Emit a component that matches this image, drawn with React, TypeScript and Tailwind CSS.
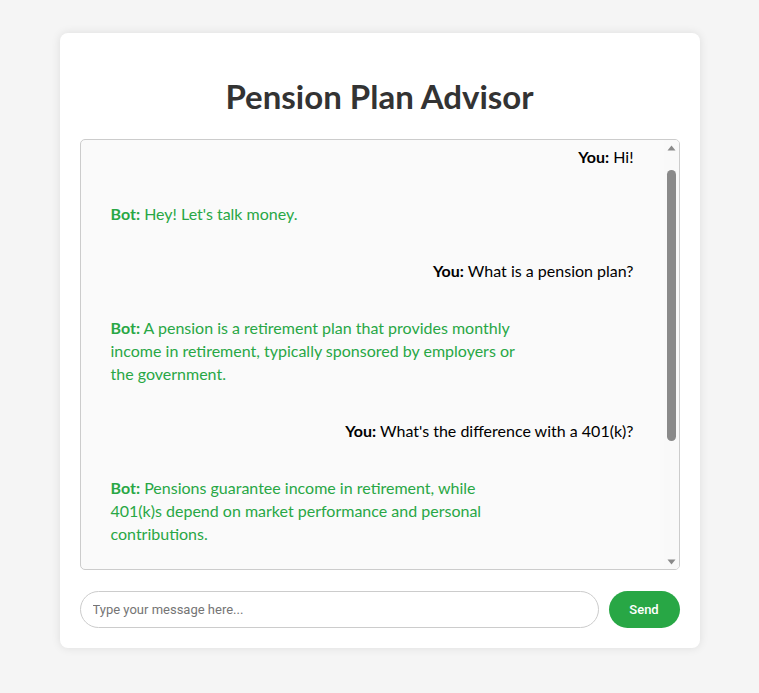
import React, { useEffect, useRef, useState } from 'react'

type Msg = { from: 'you' | 'bot'; text: string }

const initial: Msg[] = [
    { from: 'you', text: 'Hi!' },
    { from: 'bot', text: "Hey! Let's talk money." },
    { from: 'you', text: 'What is a pension plan?' },
    { from: 'bot', text: 'A pension is a retirement plan that provides monthly income in retirement, typically sponsored by employers or the government.' },
    { from: 'you', text: "What's the difference with a 401(k)?" },
    { from: 'bot', text: 'Pensions guarantee income in retirement, while 401(k)s depend on market performance and personal contributions.' },
]

function ScrollBar() {
    return (
        <div className="flex w-[15px] flex-col items-center bg-[#f9f9f9]">
            <div className="flex h-[15px] items-center justify-center">
                <svg width="9" height="6" viewBox="0 0 9 6">
                    <path d="M4.5 0.5 L8.5 5.5 L0.5 5.5 Z" fill="#8a8a8a" />
                </svg>
            </div>
            <div className="flex-1">
                <div className="mt-[15px] h-[271px] w-[9px] rounded-full bg-[#8a8a8a]"></div>
            </div>
            <div className="flex h-[15px] items-center justify-center">
                <svg width="9" height="6" viewBox="0 0 9 6">
                    <path d="M0.5 0.5 L8.5 0.5 L4.5 5.5 Z" fill="#8a8a8a" />
                </svg>
            </div>
        </div>
    )
}

export default function App() {
    const [messages, setMessages] = useState<Msg[]>(initial)
    const [input, setInput] = useState('')
    const boxRef = useRef<HTMLDivElement>(null)

    useEffect(() => {
        if (boxRef.current) boxRef.current.scrollTop = 25
    }, [])

    const send = () => {
        if (!input.trim()) return
        setMessages([...messages, { from: 'you', text: input }])
        setInput('')
    }

    return (
        <div className="min-h-screen bg-[#f5f5f5] pt-[33px] font-['Segoe_UI','Lato','Noto_Sans',sans-serif]">
            <div className="mx-auto w-[640px] rounded-lg bg-white p-5 shadow-[0_0_10px_rgba(0,0,0,0.1)]">
                <h1 className="my-[22px] text-center text-[33px] font-bold leading-[42px] text-[#333]">
                    Pension Plan Advisor
                </h1>

                <div className="flex h-[431px] overflow-hidden rounded-[5px] border border-[#ccc] bg-[#fafafa]">
                    <div ref={boxRef} className="flex-1 overflow-hidden px-2.5 pt-[18px] pb-2.5">
                        {messages.map((m, i) =>
                            m.from === 'you' ? (
                                <div key={i} className="mx-2.5 mb-2.5 px-2.5 py-3 text-right text-base leading-[23px] text-black">
                                    <b>You:</b> {m.text}
                                </div>
                            ) : (
                                <div key={i} className="mx-2.5 mb-2.5 max-w-[436px] px-2.5 py-3 text-base leading-[23px] text-[#28a745]">
                                    <b>Bot:</b> {m.text}
                                </div>
                            )
                        )}
                        <div className="h-[170px]"></div>
                    </div>
                    <ScrollBar />
                </div>

                <div className="mt-[21px] flex items-center gap-2.5">
                    <input
                        value={input}
                        onChange={(e) => setInput(e.target.value)}
                        onKeyDown={(e) => e.key === 'Enter' && send()}
                        placeholder="Type your message here..."
                        className="h-[37px] flex-1 rounded-full border border-[#ccc] bg-white px-3 font-['Roboto',sans-serif] text-[13px] text-[#333] outline-none placeholder:text-[#757575]"
                    />
                    <button
                        onClick={send}
                        className="h-[37px] w-[71px] rounded-full bg-[#28a745] font-['Roboto',sans-serif] text-[13px] font-medium text-white"
                    >
                        Send
                    </button>
                </div>
            </div>
        </div>
    )
}
